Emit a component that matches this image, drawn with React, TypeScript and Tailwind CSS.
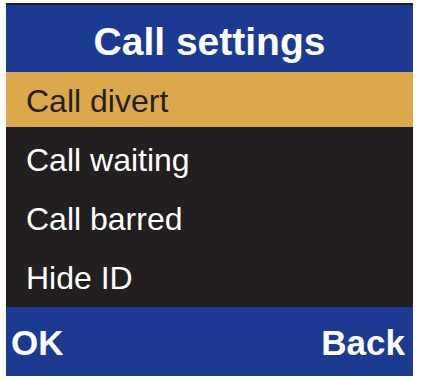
export default function App() {
  const items = ["Call waiting", "Call barred", "Hide ID"];

  return (
    <div
      className="w-[422px] h-[380px] bg-white pt-[3px] pl-[6px]"
      style={{ fontFamily: '"Liberation Sans", Arial, sans-serif' }}
    >
      <div className="w-[407px] border-t-2 border-[#231f20]">
        {/* header */}
        <div className="h-[67px] bg-[#1d3a92] flex items-center justify-center pt-[5px]">
          <span className="text-white font-bold text-[39px] leading-none">Call settings</span>
        </div>

        {/* selected row */}
        <div className="h-[55px] bg-[#dba94b] flex items-center pl-[20px] pt-[3px]">
          <span className="text-[#231f20] text-[32px] leading-none">Call divert</span>
        </div>

        {/* other rows */}
        <div className="h-[180px] bg-[#231f20]">
          {items.map((label) => (
            <div key={label} className="h-[59px] flex items-center pl-[20px] pt-[7px]">
              <span className="text-white text-[32px] leading-none">{label}</span>
            </div>
          ))}
        </div>

        {/* soft keys */}
        <div className="h-[69px] bg-[#1d3a92] flex items-center justify-between pl-[5px] pr-[8px] pt-[2px]">
          <span className="text-white font-bold text-[35px] leading-none">OK</span>
          <span className="text-white font-bold text-[35px] leading-none">Back</span>
        </div>
      </div>
    </div>
  );
}
